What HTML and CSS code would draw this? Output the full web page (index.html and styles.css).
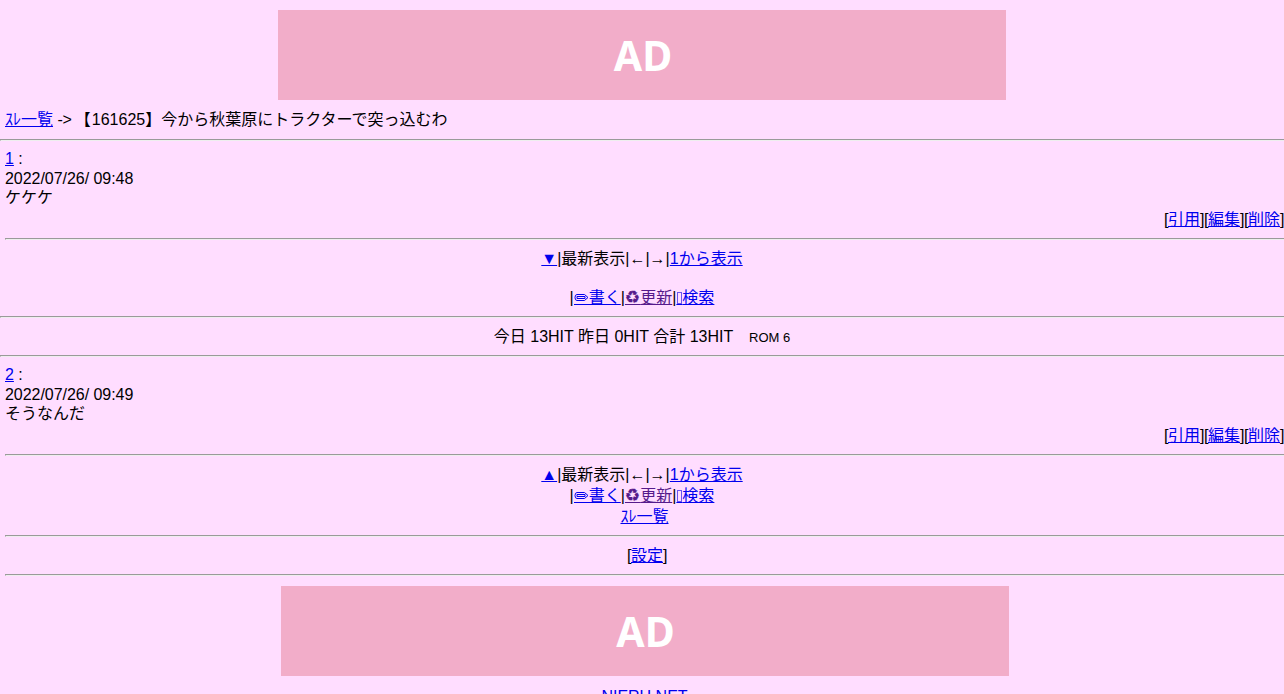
FILE: index.html
```html
<!DOCTYPE html>
<html lang="ja">
<head>
    <meta charset="UTF-8">
    <meta name="viewport" content="width=device-width, initial-scale=1.0">
    <title>今から秋葉原にトラクターで突っ込むわ</title>
    <link rel="stylesheet" href="styles.css">
</head>
<body>

    <div class="ad">AD</div>

    <div class="title indent"><a href="#">ｽﾚ一覧</a> <span class="arrow">-&gt;</span> <span class="bracket">【</span>161625】今から秋葉原にトラクターで突っ込むわ</div>
    <hr>

    <div class="indent">
        <div class="post-no"><a href="#">1</a> :</div>
        <div class="date">2022/07/26/ 09:48</div>
        <div class="message">ケケケ</div>
        <div class="actions"><i>[</i><a href="#">引用</a><i>][</i><a href="#">編集</a><i>][</i><a href="#">削除</a><i>]</i></div>
        <hr>
    </div>

    <div class="nav">
        <div><a href="#">▼</a>|最新表示|←|→|<a href="#">1から表示</a></div>
        <div class="blank"></div>
        <div>|<a href="#"><svg class="pencil" width="15" height="16" viewBox="0 0 15 16"><path d="M3 4.500h7.500l3.500 3-3.500 3H3Q1 10.500 1 7.500T3 4.500zM3 6.500h8v2H3z"/><path d="M0 14.500h15"/></svg>書く</a>|<a class="visited" href="#"><span class="recycle">♻</span>更新</a>|<a href="#"><span class="box">&nbsp;</span>検索</a></div>
    </div>
    <hr>
    <div class="counter">今日 13HIT 昨日 0HIT 合計 13HIT　<small>ROM 6</small></div>
    <hr>

    <div class="indent">
        <div class="post-no"><a href="#">2</a> :</div>
        <div class="date">2022/07/26/ 09:49</div>
        <div class="message">そうなんだ</div>
        <div class="actions"><i>[</i><a href="#">引用</a><i>][</i><a href="#">編集</a><i>][</i><a href="#">削除</a><i>]</i></div>
        <hr>
    </div>

    <div class="nav">
        <div><a href="#">▲</a>|最新表示|←|→|<a href="#">1から表示</a></div>
        <div>|<a href="#"><svg class="pencil" width="15" height="16" viewBox="0 0 15 16"><path d="M3 4.500h7.500l3.500 3-3.500 3H3Q1 10.500 1 7.500T3 4.500zM3 6.500h8v2H3z"/><path d="M0 14.500h15"/></svg>書く</a>|<a class="visited" href="#"><span class="recycle">♻</span>更新</a>|<a href="#"><span class="box">&nbsp;</span>検索</a></div>
    </div>

    <div class="indent footer">
        <div><a href="#">ｽﾚ一覧</a></div>
        <hr>
        <div class="indent"><i>[</i><a href="#">設定</a><i>]</i></div>
        <hr>
        <div class="ad">AD</div>
        <div><a href="#">NIERU.NET</a></div>
    </div>

</body>
</html>
```
FILE: styles.css
```css
html {
    overflow: hidden;
}

body {
    margin: 0;
    background-color: #ffddff;
    color: #000;
    font-family: "Liberation Sans", "Noto Sans CJK JP", sans-serif;
    font-size: 16px;
    line-height: 21px;
}

a {
    color: #0000ee;
}

a.visited {
    color: #551a8b;
}

i {
    font-style: normal;
    letter-spacing: -0.45px;
}

hr {
    height: 0;
    margin: 8px 0;
    border: 1px solid;
    border-color: #9a9a9a #eee #eee #9a9a9a;
    border-right: none;
}

.indent {
    padding-left: 5px;
}

.ad {
    box-sizing: border-box;
    width: 728px;
    height: 90px;
    margin: 10px auto;
    padding-left: 2px;
    background-color: #f2adc9;
    color: #fff;
    font-family: "Noto Sans", sans-serif;
    font-size: 41px;
    font-weight: bold;
    line-height: 91px;
    text-align: center;
}

.title {
    padding-bottom: 2px;
    line-height: 19px;
}

.arrow {
    letter-spacing: -0.4px;
}

.bracket {
    margin-left: -1px;
    letter-spacing: 1px;
}

.post-no {
    line-height: 19px;
}

.date {
    line-height: 22px;
    letter-spacing: -0.04px;
}

.message {
    line-height: 15px;
}

.actions {
    padding-top: 4px;
    text-align: right;
}

.nav,
.counter,
.footer {
    text-align: center;
}

.counter {
    line-height: 21px;
}

small {
    font-size: 13px;
    line-height: 1;
}

.blank {
    height: 18px;
}

.pencil {
    vertical-align: -3px;
    fill: none;
    stroke: currentColor;
}

.recycle {
    font-family: "DejaVu Sans", sans-serif;
    font-size: 17px;
    line-height: 1;
    -webkit-text-stroke: 0.3px;
}

/* empty glyph box in front of the search link */
.box {
    position: relative;
    letter-spacing: 1.55px;
}

.box::before {
    content: "";
    position: absolute;
    left: 1px;
    top: 3px;
    width: 3px;
    height: 10px;
    border: 1px solid #6b55f0;
}
```
